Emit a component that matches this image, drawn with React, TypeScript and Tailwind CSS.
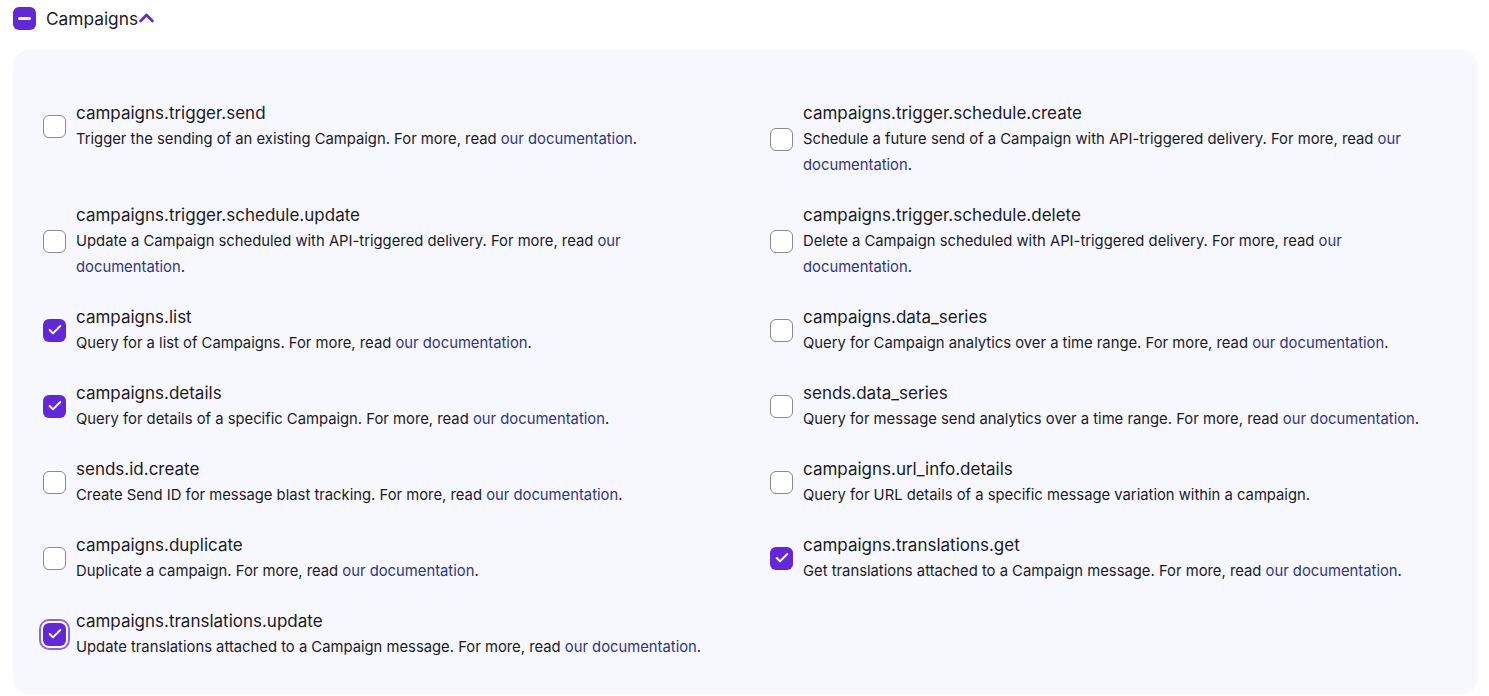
import { Check } from 'lucide-react'

type Scope = { name: string; desc: string; link: boolean; checked: boolean; focused?: boolean }

const scopes: Scope[] = [
  { name: 'campaigns.trigger.send', desc: 'Trigger the sending of an existing Campaign.', link: true, checked: false },
  { name: 'campaigns.trigger.schedule.create', desc: 'Schedule a future send of a Campaign with API-triggered delivery.', link: true, checked: false },
  { name: 'campaigns.trigger.schedule.update', desc: 'Update a Campaign scheduled with API-triggered delivery.', link: true, checked: false },
  { name: 'campaigns.trigger.schedule.delete', desc: 'Delete a Campaign scheduled with API-triggered delivery.', link: true, checked: false },
  { name: 'campaigns.list', desc: 'Query for a list of Campaigns.', link: true, checked: true },
  { name: 'campaigns.data_series', desc: 'Query for Campaign analytics over a time range.', link: true, checked: false },
  { name: 'campaigns.details', desc: 'Query for details of a specific Campaign.', link: true, checked: true },
  { name: 'sends.data_series', desc: 'Query for message send analytics over a time range.', link: true, checked: false },
  { name: 'sends.id.create', desc: 'Create Send ID for message blast tracking.', link: true, checked: false },
  { name: 'campaigns.url_info.details', desc: 'Query for URL details of a specific message variation within a campaign.', link: false, checked: false },
  { name: 'campaigns.duplicate', desc: 'Duplicate a campaign.', link: true, checked: false },
  { name: 'campaigns.translations.get', desc: 'Get translations attached to a Campaign message.', link: true, checked: true },
  { name: 'campaigns.translations.update', desc: 'Update translations attached to a Campaign message.', link: true, checked: true, focused: true },
]

function Box({ checked, focused }: { checked: boolean; focused?: boolean }) {
  if (checked) {
    return (
      <span
        className={
          'flex h-[23px] w-[23px] shrink-0 items-center justify-center rounded-[6px] bg-[#6227d9] ' +
          (focused ? 'ring-2 ring-[#8f63ec] ring-offset-2 ring-offset-white' : '')
        }
      >
        <Check className="h-4 w-4 text-white" strokeWidth={3} />
      </span>
    )
  }
  return <span className="block h-[23px] w-[23px] shrink-0 rounded-[6px] border border-[#8a8a8a] bg-white" />
}

export default function App() {
  return (
    <div className="min-h-screen bg-white text-[#1b1b1f]" style={{ fontFamily: 'Inter, "Noto Sans", sans-serif' }}>
      <div className="flex items-center gap-[10px] px-[13px] pt-[7px]">
        <span className="flex h-[23px] w-[23px] items-center justify-center rounded-[6px] bg-[#6227d9]">
          <span className="block h-[3px] w-[13px] rounded bg-white" />
        </span>
        <span className="flex items-center text-[17.3px] leading-[23px]">
          Campaigns
          <svg width="15" height="10" viewBox="0 0 15 10" className="ml-[1px] mb-[2px]" fill="none">
            <polyline points="1.5,8 7.5,2 13.5,8" stroke="#6227d9" strokeWidth="2.6" strokeLinecap="round" strokeLinejoin="round" />
          </svg>
        </span>
      </div>

      <div className="ml-[13px] mr-[11px] mt-[20px] rounded-[16px] bg-[#f7f7fe] pb-[34px] pl-[30px] pr-[30px] pt-[50px]">
        <div className="grid grid-cols-2 items-start gap-x-[49px] gap-y-[24px]">
          {scopes.map((s) => (
            <div key={s.name} className="flex items-center gap-[10px]">
              <Box checked={s.checked} focused={s.focused} />
              <div>
                <div className="text-[17px] leading-[26px]">{s.name}</div>
                <div className="text-[14.8px] leading-[26px]">
                  {s.desc}
                  {s.link && (
                    <>
                      {' '}For more, read <span className="text-[#2e3580]">our documentation</span>.
                    </>
                  )}
                </div>
              </div>
            </div>
          ))}
        </div>
      </div>
    </div>
  )
}
